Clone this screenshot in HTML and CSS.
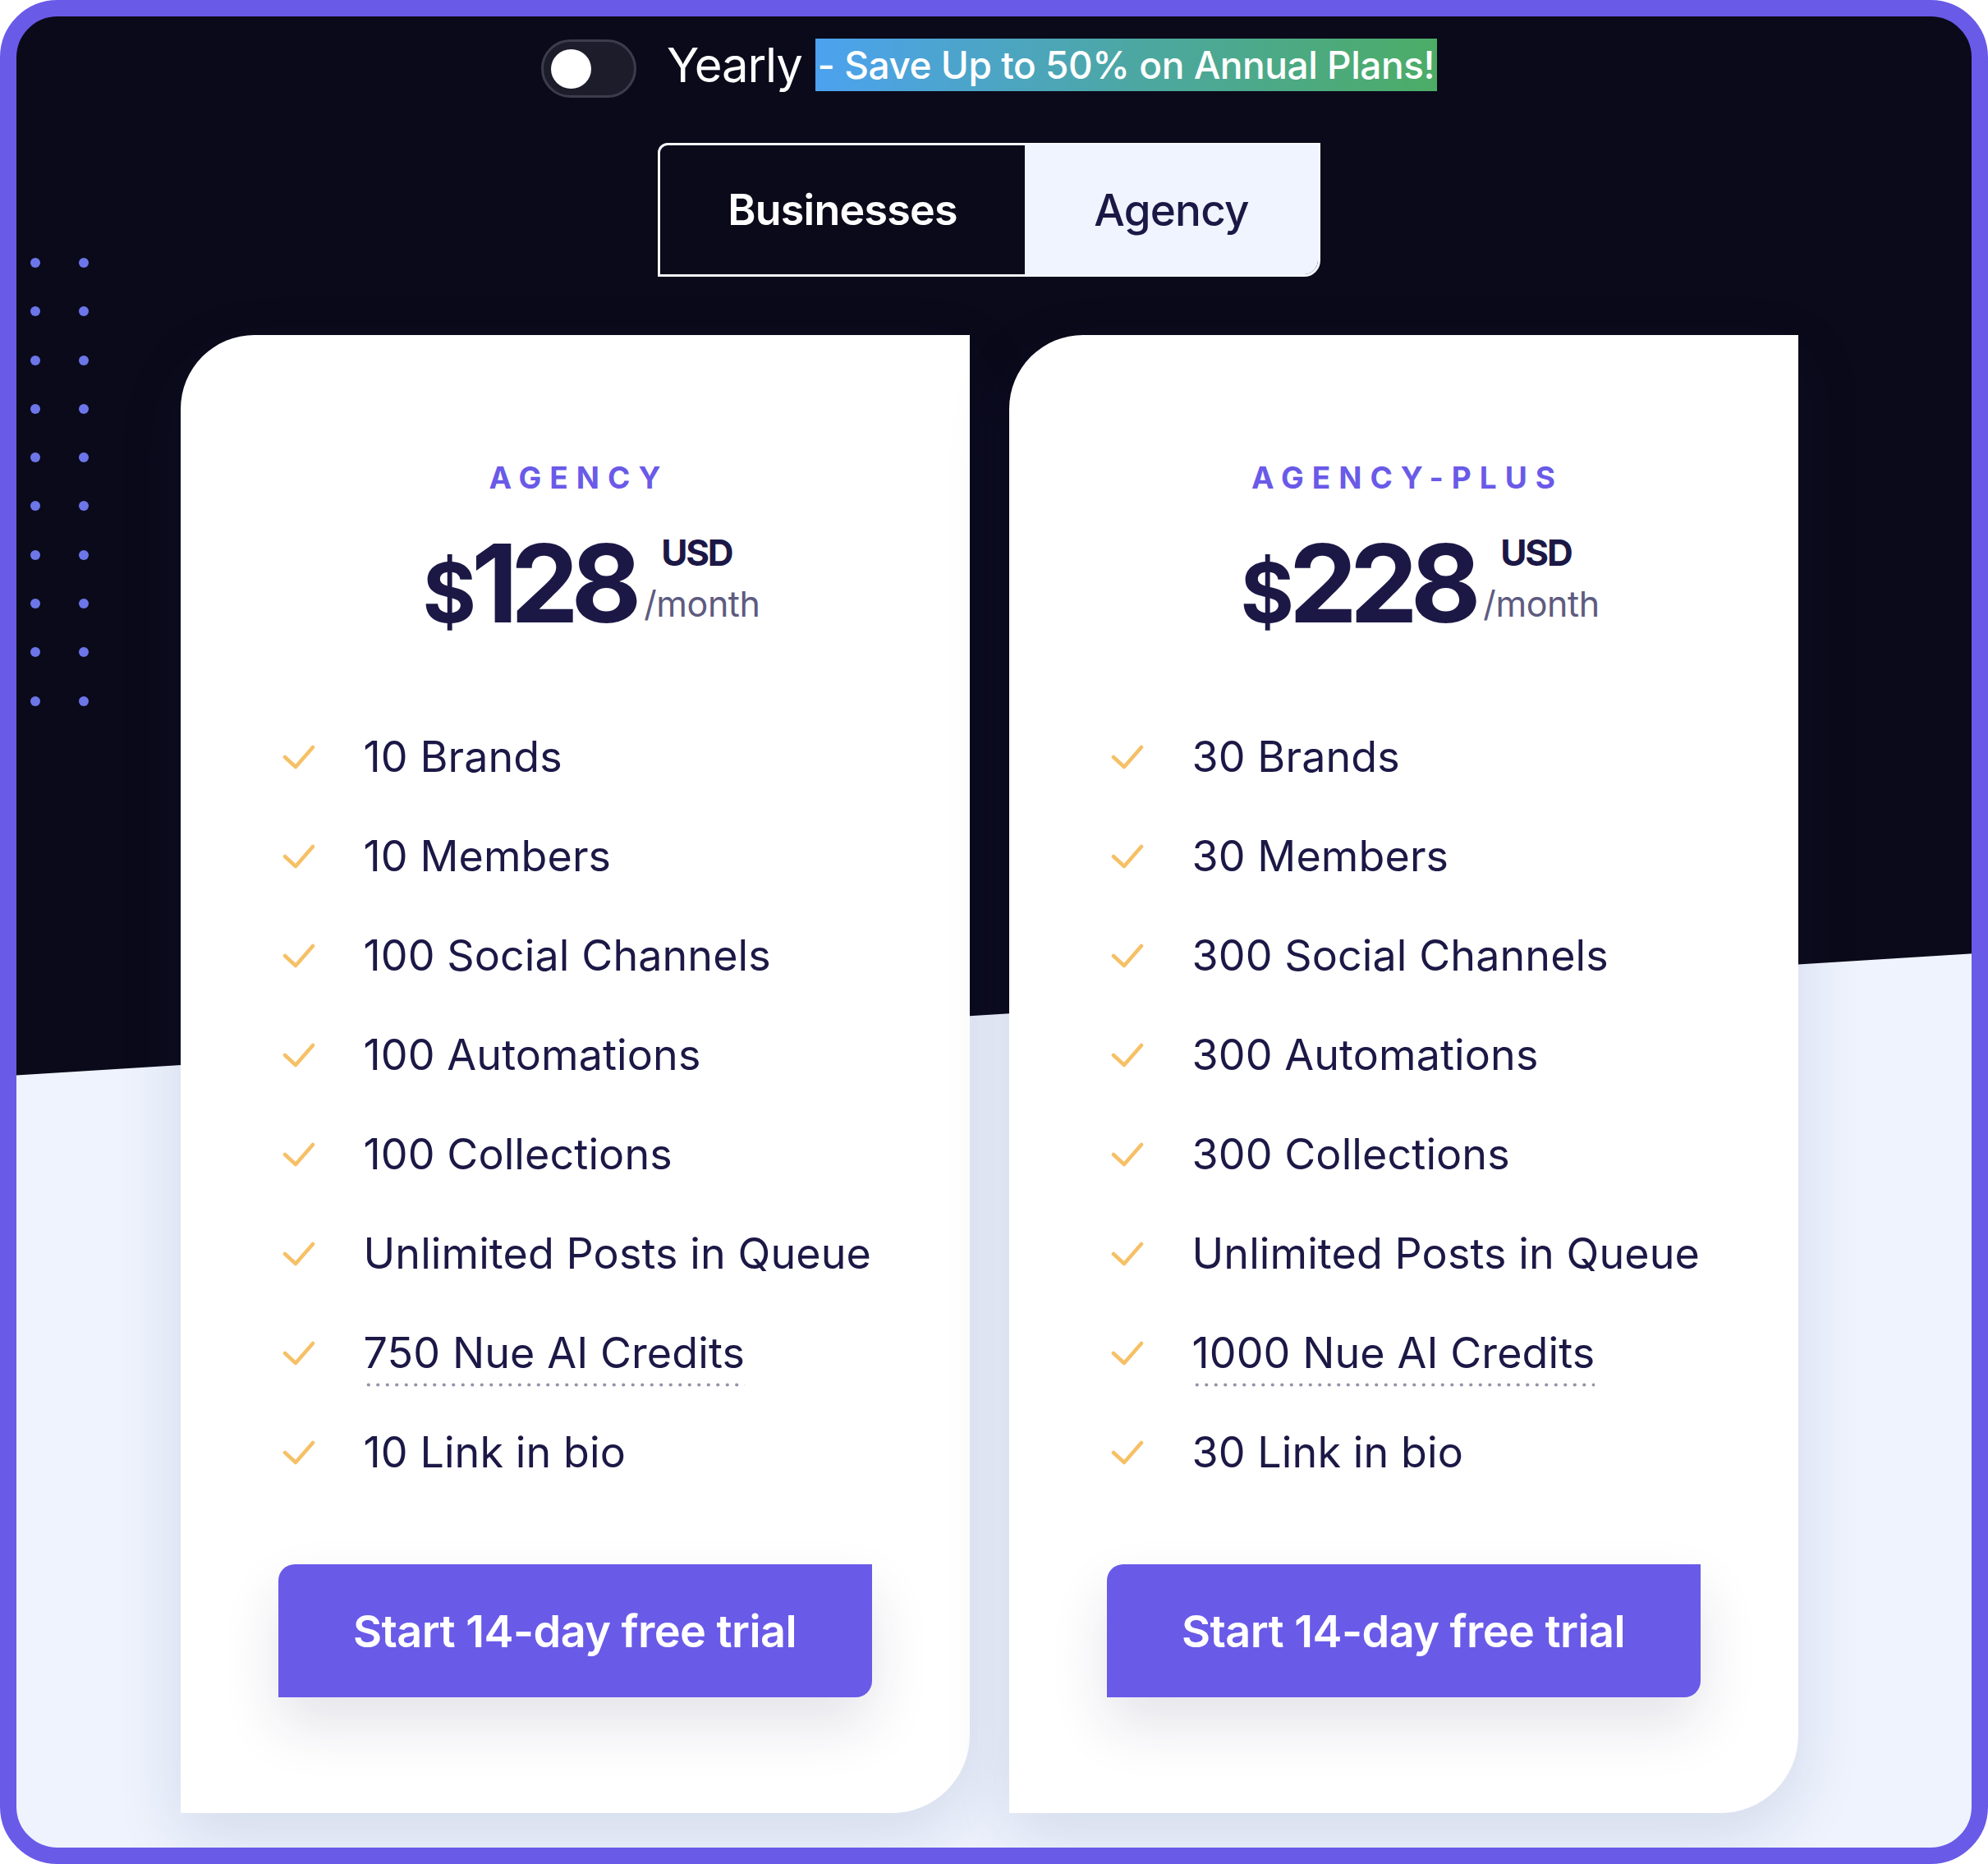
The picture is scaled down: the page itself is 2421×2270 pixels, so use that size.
FILE: index.html
```html
<!DOCTYPE html>
<html lang="en">
<head>
<meta charset="utf-8">
<title>Pricing – Agency</title>
<link rel="stylesheet" href="styles.css">
</head>
<body>
<div class="frame">
  <div class="dots">
    <i></i><i></i><i></i><i></i><i></i><i></i><i></i><i></i><i></i><i></i>
    <i></i><i></i><i></i><i></i><i></i><i></i><i></i><i></i><i></i><i></i>
  </div>

  <div class="billing">
    <span class="switch"><span class="knob"></span></span>
    <span class="yearly">Yearly</span>
    <span class="save">- Save Up to 50% on Annual Plans!</span>
  </div>

  <div class="tabs">
    <div class="tab">Businesses</div>
    <div class="tab tab-active">Agency</div>
  </div>

  <div class="cards">
    <div class="card">
      <div class="plan">AGENCY</div>
      <div class="price">
        <span class="amount"><span class="dollar">$</span>128</span>
        <span class="unit"><span class="cur">USD</span><span class="per">/month</span></span>
      </div>
      <ul class="features">
        <li><svg class="check" viewBox="0 0 40 30"><polyline points="3,15 16,27 37,3"/></svg><span>10 Brands</span></li>
        <li><svg class="check" viewBox="0 0 40 30"><polyline points="3,15 16,27 37,3"/></svg><span>10 Members</span></li>
        <li><svg class="check" viewBox="0 0 40 30"><polyline points="3,15 16,27 37,3"/></svg><span>100 Social Channels</span></li>
        <li><svg class="check" viewBox="0 0 40 30"><polyline points="3,15 16,27 37,3"/></svg><span>100 Automations</span></li>
        <li><svg class="check" viewBox="0 0 40 30"><polyline points="3,15 16,27 37,3"/></svg><span>100 Collections</span></li>
        <li><svg class="check" viewBox="0 0 40 30"><polyline points="3,15 16,27 37,3"/></svg><span>Unlimited Posts in Queue</span></li>
        <li><svg class="check" viewBox="0 0 40 30"><polyline points="3,15 16,27 37,3"/></svg><span class="dotted">750 Nue AI Credits</span></li>
        <li><svg class="check" viewBox="0 0 40 30"><polyline points="3,15 16,27 37,3"/></svg><span>10 Link in bio</span></li>
      </ul>
      <div class="cta">Start 14-day free trial</div>
    </div>

    <div class="card">
      <div class="plan">AGENCY-PLUS</div>
      <div class="price">
        <span class="amount"><span class="dollar">$</span>228</span>
        <span class="unit"><span class="cur">USD</span><span class="per">/month</span></span>
      </div>
      <ul class="features">
        <li><svg class="check" viewBox="0 0 40 30"><polyline points="3,15 16,27 37,3"/></svg><span>30 Brands</span></li>
        <li><svg class="check" viewBox="0 0 40 30"><polyline points="3,15 16,27 37,3"/></svg><span>30 Members</span></li>
        <li><svg class="check" viewBox="0 0 40 30"><polyline points="3,15 16,27 37,3"/></svg><span>300 Social Channels</span></li>
        <li><svg class="check" viewBox="0 0 40 30"><polyline points="3,15 16,27 37,3"/></svg><span>300 Automations</span></li>
        <li><svg class="check" viewBox="0 0 40 30"><polyline points="3,15 16,27 37,3"/></svg><span>300 Collections</span></li>
        <li><svg class="check" viewBox="0 0 40 30"><polyline points="3,15 16,27 37,3"/></svg><span>Unlimited Posts in Queue</span></li>
        <li><svg class="check" viewBox="0 0 40 30"><polyline points="3,15 16,27 37,3"/></svg><span class="dotted">1000 Nue AI Credits</span></li>
        <li><svg class="check" viewBox="0 0 40 30"><polyline points="3,15 16,27 37,3"/></svg><span>30 Link in bio</span></li>
      </ul>
      <div class="cta">Start 14-day free trial</div>
    </div>
  </div>
</div>
</body>
</html>
```

FILE: styles.css
```css
* { box-sizing: border-box; }

html, body {
  margin: 0;
  padding: 0;
  background: #ffffff;
}

body {
  font-family: Inter, "Noto Sans", "Liberation Sans", sans-serif;
  color: #1c1846;
}

.frame {
  position: relative;
  width: 2421px;
  height: 2270px;
  border: 20px solid #6a5ae8;
  border-radius: 70px;
  padding: 28px 12px 0 0;
  background: linear-gradient(176.44deg, #0b0a1a 1286.5px, #eef3fd 1287.5px);
  overflow: hidden;
}

/* decorative dot grid */
.dots {
  position: absolute;
  left: 17px;
  top: 294px;
  display: grid;
  grid-template-columns: 12px 12px;
  column-gap: 47px;
  row-gap: 47.3px;
}
.dots i {
  display: block;
  width: 12px;
  height: 12px;
  border-radius: 50%;
  background: #6c76e9;
}

/* billing toggle row */
.billing {
  display: flex;
  align-items: center;
  justify-content: center;
  height: 71px;
}
.switch {
  display: flex;
  align-items: center;
  width: 116px;
  height: 71px;
  padding-left: 9px;
  border: 3px solid #3d3c4c;
  border-radius: 36px;
  background: #1d1c2b;
}
.knob {
  width: 49px;
  height: 48px;
  border-radius: 50%;
  background: #ffffff;
}
.yearly {
  margin-left: 37px;
  margin-bottom: 9px;
  font-size: 58px;
  line-height: 1;
  letter-spacing: -0.02em;
  color: #ffffff;
}
.save {
  margin-left: 16px;
  margin-bottom: 9px;
  height: 64px;
  padding: 0 3px;
  font-size: 46px;
  line-height: 64px;
  font-weight: 500;
  letter-spacing: -0.01em;
  color: #ffffff;
  white-space: nowrap;
  background: linear-gradient(90deg, #4ca2ef 0%, #4ca7a4 50%, #4cac66 100%);
}

/* audience tabs */
.tabs {
  display: flex;
  width: 807px;
  height: 163px;
  margin: 55px auto 0;
  border: 3px solid #f4f7ff;
  border-radius: 12px 0 20px 0;
  overflow: hidden;
  background: #0b0a1a;
}
.tab {
  display: flex;
  align-items: center;
  justify-content: center;
  height: 100%;
  font-size: 53px;
  letter-spacing: -0.015em;
}
.tab:first-child {
  width: 444px;
  color: #ffffff;
  font-weight: 600;
  font-size: 52px;
}
.tab-active {
  flex: 1;
  background: #eff4fe;
  color: #1c1846;
  font-weight: 500;
}

/* cards */
.cards {
  display: flex;
  justify-content: center;
  gap: 48px;
  margin-top: 71px;
}
.card {
  width: 961px;
  padding: 155px 119px 141px;
  background: #ffffff;
  border-radius: 90px 0 95px 0;
  box-shadow: 0 26px 80px rgba(34, 44, 110, 0.13);
}
.plan {
  text-align: center;
  font-size: 37px;
  line-height: 1;
  font-weight: 700;
  letter-spacing: 0.27em;
  padding-left: 0.27em;
  color: #6a5ae8;
}
.price {
  display: flex;
  align-items: flex-end;
  justify-content: center;
  padding-left: 40px;
  margin-top: 44px;
  height: 132px;
}
.amount {
  font-size: 132px;
  line-height: 1;
  font-weight: 700;
  letter-spacing: -0.07em;
  color: #1c1846;
}
.dollar {
  font-size: 100px;
  letter-spacing: -0.06em;
}
.unit {
  display: flex;
  flex-direction: column;
  gap: 19px;
  margin-left: 12px;
  margin-bottom: 19px;
}
.cur {
  margin-left: 21px;
  font-size: 44px;
  line-height: 1;
  font-weight: 700;
  letter-spacing: -0.05em;
  color: #1c1846;
}
.per {
  font-size: 43px;
  line-height: 1;
  letter-spacing: -0.01em;
  color: #5e5b80;
}

.features {
  list-style: none;
  margin: 85px 0 0;
  padding: 0;
}
.features li {
  display: flex;
  align-items: center;
  height: 121px;
  font-size: 52px;
  color: #1c1846;
  letter-spacing: 0.002em;
  white-space: nowrap;
}
.check {
  flex: none;
  width: 40px;
  height: 30px;
  margin-left: 5px;
  margin-right: 59px;
  fill: none;
  stroke: #f6c066;
  stroke-width: 4.5;
  stroke-linecap: round;
  stroke-linejoin: round;
}
.dotted {
  padding-bottom: 10px;
  margin-bottom: -10px;
  background-image: radial-gradient(circle, #9492a8 1.7px, transparent 2.3px);
  background-size: 11.5px 5px;
  background-repeat: repeat-x;
  background-position: 0 100%;
}

.cta {
  display: flex;
  align-items: center;
  justify-content: center;
  height: 162px;
  margin-top: 76px;
  background: #6a5ae8;
  border-radius: 20px 0 20px 0;
  color: #ffffff;
  font-size: 54px;
  font-weight: 600;
  letter-spacing: -0.01em;
  box-shadow: 0 34px 70px rgba(30, 30, 80, 0.12);
}
```
